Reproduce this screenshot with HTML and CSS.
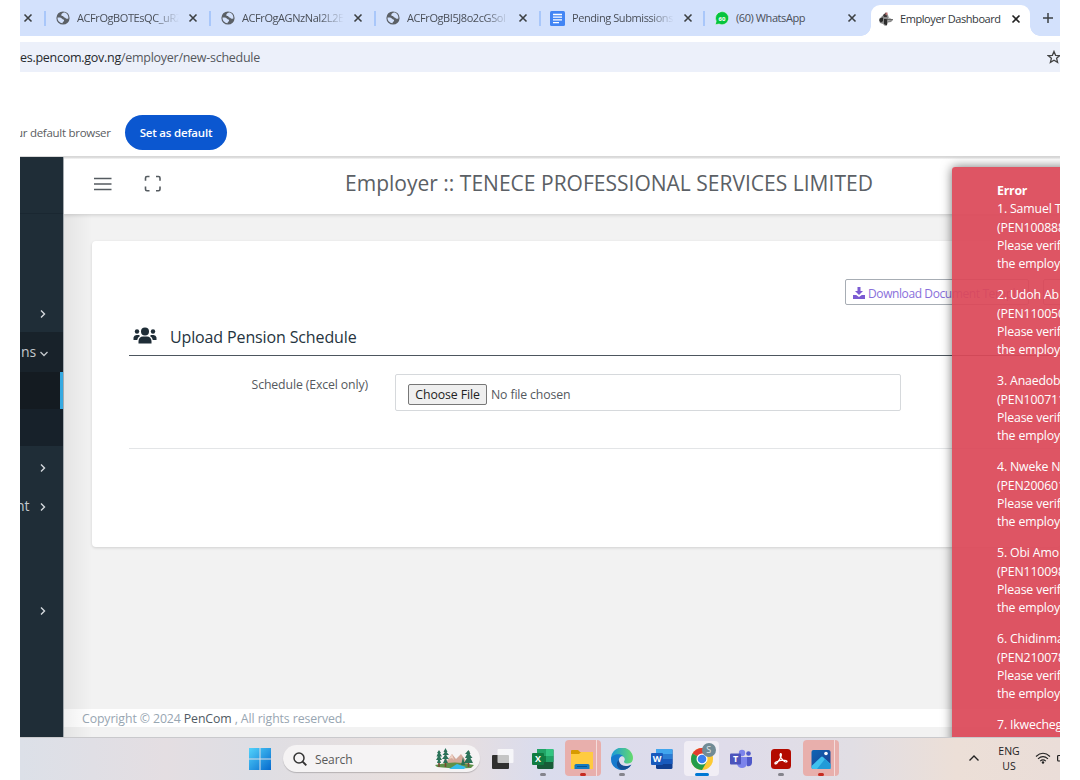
FILE: index.html
```html
<!DOCTYPE html>
<html lang="en">
<head>
<meta charset="utf-8">
<title>Employer Dashboard</title>
<link rel="stylesheet" href="styles.css">
</head>
<body>
<svg class="defs" width="0" height="0">
  <symbol id="globe" viewBox="0 0 14 14"><circle cx="7" cy="7" r="6.600" fill="#5b6066"/><path d="M8 1.500C6 2 5 3.200 5.400 4.400c.5 1 1.800.4 2.200 1.300.3.8 1.600.6 1.900 1.400.3.9 1.600.8 2.900.3C12.600 4 10.500 1.500 8 1.500ZM1.500 6.600c1.900-.3 3.700-.1 4.600 1.200.6.9 2.100.5 2 1.700-.1 1.100-1.500 1-1.600 2.800C3.700 12 1.400 9.800 1.500 6.600Z" fill="#d3e1fc"/></symbol>
  <symbol id="x" viewBox="0 0 10 10"><path d="M1.500 1.500 8.500 8.500M8.500 1.500 1.500 8.500" stroke="currentColor" stroke-width="1.600" fill="none"/></symbol>
  <symbol id="chev" viewBox="0 0 8 10"><path d="M2 1.500 5.500 5 2 8.500" stroke="#d5dade" stroke-width="1.400" fill="none"/></symbol>
</svg>
<div class="screen">
  <div class="tabs">
    <div class="tab tab-cut"><svg class="close"><use href="#x"/></svg></div>
    <div class="tab"><svg class="fav"><use href="#globe"/></svg><span class="tab-title fade">ACFrOgBOTEsQC_uRZ</span><svg class="close"><use href="#x"/></svg></div>
    <div class="tab"><svg class="fav"><use href="#globe"/></svg><span class="tab-title fade">ACFrOgAGNzNaI2L2E</span><svg class="close"><use href="#x"/></svg></div>
    <div class="tab"><svg class="fav"><use href="#globe"/></svg><span class="tab-title fade">ACFrOgBI5J8o2cGSoI</span><svg class="close"><use href="#x"/></svg></div>
    <div class="tab tab-doc"><svg class="fav doc" viewBox="0 0 15 15"><rect width="15" height="15" rx="1.500" fill="#4285f4"/><path d="M3 3.500h9M3 6.200h9M3 8.900h9M3 11.600h6" stroke="#fff" stroke-width="1.300"/></svg><span class="tab-title fade">Pending Submissions</span><svg class="close"><use href="#x"/></svg></div>
    <div class="tab tab-wa"><svg class="fav" viewBox="0 0 14 14"><path d="M.3 13.700 1.200 10.200A6.600 6.600 0 1 1 4 13Z" fill="#06c43c" stroke="#fff" stroke-width=".5"/><text x="7" y="9.500" class="badge">60</text></svg><span class="tab-title">(60) WhatsApp</span><svg class="close"><use href="#x"/></svg></div>
    <div class="tab-active"><svg class="fav" viewBox="0 0 14 14"><path d="M0 8 2 5 5 2.500 7 1l2 2 1 3 4 2-2 2-3 .5-1 2.500-2 1-2-2-3-1Z" fill="#8b8b8b"/><path d="M.5 6.500 4 5.500V9L2 10.500.5 9ZM5 7h3v6.500L5 12Z" fill="#2c2c2c"/><path d="M4 3 7 .5 8 5H5Z" fill="#3a3434"/><path d="m9 5 4.500 2.500L9 9Z" fill="#b5b5b5"/><path d="M7.500 7.500H14" stroke="#555" stroke-width=".8"/><path d="M6.500.5h2V3h-2Z" fill="#b57070"/></svg><span class="tab-title">Employer Dashboard</span><svg class="close"><use href="#x"/></svg></div>
    <div class="tab-new"><svg viewBox="0 0 10 10"><path d="M5 0v10M0 5h10" stroke="#3c4043" stroke-width="1.500"/></svg></div>
  </div>
  <div class="urlbar"><span class="url"><b>es.pencom.gov.ng</b>/employer/new-schedule</span>
    <svg class="star" viewBox="0 0 14 14"><path d="m7 1.400 1.600 3.900 4.200.3-3.200 2.700 1 4.100L7 10.200l-3.600 2.200 1-4.100L1.200 5.600l4.200-.3Z" fill="none" stroke="#444" stroke-width="1.300"/></svg>
  </div>
  <div class="infobar"><span class="info-text">ur default browser</span><span class="set-default">Set as default</span></div>

  <div class="app">
    <nav class="side">
      <div class="nav-item i1"><svg class="chev"><use href="#chev"/></svg></div>
      <div class="nav-item open"><span class="nav-text ons">ns</span><svg class="chev-down" viewBox="0 0 10 8"><path d="M1.500 2 5 5.500 8.500 2" stroke="#c3c8cc" stroke-width="1.300" fill="none"/></svg></div>
      <div class="sub current"></div>
      <div class="sub"></div>
      <div class="nav-item i2"><svg class="chev"><use href="#chev"/></svg></div>
      <div class="nav-item i3"><span class="nav-text ment">nt</span><svg class="chev"><use href="#chev"/></svg></div>
      <div class="nav-item i4"><svg class="chev"><use href="#chev"/></svg></div>
    </nav>
    <main class="main">
      <header class="header">
        <svg class="burger" viewBox="0 0 18 14"><path d="M0 1.500h17.500M0 7h17.500M0 12.500h17.500" stroke="#555b60" stroke-width="1.600"/></svg>
        <svg class="full" viewBox="0 0 18 18"><path d="M1.500 5.800V3q0-1.500 1.500-1.500H5.500M12 1.500h2.500Q16 1.500 16 3v2.800M16 11.500V14.300q0 1.500-1.500 1.500H12M5.500 15.800H3q-1.500 0-1.500-1.500V11.500" fill="none" stroke="#555b60" stroke-width="1.600"/></svg>
        <h1 class="title">Employer :: TENECE PROFESSIONAL SERVICES LIMITED</h1>
      </header>
      <section class="card">
        <div class="actions"><span class="btn"><svg class="dl" viewBox="0 0 12 12"><path d="M4.500 0h3v4H10L6 8 2 4h2.500ZM0 8h3.200L6 10l2.800-2H12v4H0Z" fill="#7b5bd2"/></svg><span class="btn-text">Download Document Template</span></span><span class="btn"></span></div>
        <div class="heading">
          <svg class="people" viewBox="0 0 24 17"><g fill="#1f2d37"><circle cx="12" cy="4.500" r="4"/><circle cx="4" cy="4.500" r="2.200"/><circle cx="20" cy="4.500" r="2.200"/><path d="M5.500 16.500V14Q6 9.500 10 9.500h4q4 0 4.500 4.500v2.500ZM.5 13v-2.500Q1 8 3.500 8H6l1 1Q4.500 10.500 4.200 13ZM23.500 13v-2.500Q23 8 20.500 8H18l-1 1q2.500 1.500 2.800 4Z"/></g></svg>
          <h2 class="sub-title">Upload Pension Schedule</h2>
        </div>
        <div class="field">
          <label class="label">Schedule (Excel only)</label>
          <div class="file"><span class="choose">Choose File</span><span class="nofile">No file chosen</span></div>
        </div>
        <div class="rule"></div>
      </section>
      <footer class="footer"><span class="copy">Copyright © 2024 <b>PenCom</b> , All rights reserved.</span></footer>
    </main>
    <aside class="toast">
      <strong class="err">Error</strong>
      <p>1. Samuel T<br>(PEN100888<br>Please verify<br>the employe</p>
      <p>2. Udoh Ab<br>(PEN110050<br>Please verify<br>the employe</p>
      <p>3. Anaedob<br>(PEN100711<br>Please verify<br>the employe</p>
      <p>4. Nweke N<br>(PEN200601<br>Please verify<br>the employe</p>
      <p>5. Obi Amo<br>(PEN110098<br>Please verify<br>the employe</p>
      <p>6. Chidinma<br>(PEN210078<br>Please verify<br>the employe</p>
      <p>7. Ikwecheg</p>
    </aside>
  </div>

  <div class="taskbar">
    <svg class="win" viewBox="0 0 22 22"><defs><linearGradient id="w" gradientUnits="userSpaceOnUse" x1="0" y1="0" x2="22" y2="22"><stop stop-color="#52d3fb"/><stop offset="1" stop-color="#0669cd"/></linearGradient></defs><path d="M0 0h10.500v10.500H0ZM11.500 0H22v10.500H11.500ZM0 11.500h10.500V22H0ZM11.500 11.500H22V22H11.500Z" fill="url(#w)"/></svg>
    <div class="search">
      <svg class="mag" viewBox="0 0 14 14"><circle cx="6" cy="6" r="5" fill="none" stroke="#333" stroke-width="1.500"/><path d="m9.600 9.600 3.700 3.700" stroke="#333" stroke-width="1.900"/></svg>
      <span class="search-text">Search</span>
      <svg class="scene" viewBox="0 0 40 21"><path d="M9 17 17 6l4 5 5-5 8 11Z" fill="#d4a99b"/><path d="m17 6-3 5 3-1 2 2Z" fill="#efd3c6"/><path d="M0 17q20-5 39 0l-3 3q-17 1-34-1Z" fill="#5e9149"/><path d="m14 21 8-5 9 3-2 2Z" fill="#35bceb"/><path d="M10.500 2v17M4 4v15M33.500 3v16" stroke="#774a32" stroke-width="1.600"/><path d="m10.500 0 2 4h-1l2.500 3h-3l3 4h-3l2 4h-5l2-4H7l3-4H7.500L10 4H8.500ZM4 2l2 3H5l2 3.500H5L7 12H5l1 3H2l1-3H1l2-3.500H1.500L3 5H2ZM33.500 2l2 4h-1l3 4h-2l2.500 5h-9l3-5h-2l2-4h-2ZM28 9l2 8h-4Z" fill="#2a7258"/></svg>
    </div>
    <div class="apps">
      <div class="cell"><svg viewBox="0 0 22 22"><rect y="7" width="17" height="14" rx="1" fill="#30302f"/><rect x="5.500" y="1" width="16" height="14" rx="1" fill="#fff" fill-opacity=".72"/></svg></div>
      <div class="cell"><svg viewBox="0 0 22 22"><rect x="5" y="1" width="16.500" height="20" rx="1.500" fill="#185c37"/><path d="M5 1h9v7H5Z" fill="#21a366"/><path d="M14 1h7.500v7H14Z" fill="#33c481"/><path d="M5 8h9v6H5Z" fill="#107c41"/><path d="M14 8h7.500v6H14Z" fill="#21a366"/><rect y="5" width="12" height="12" rx="1" fill="#107c41"/><text x="6" y="14" class="letter">X</text></svg><i class="dot"></i></div>
      <div class="cell hot"><svg viewBox="0 0 22 22"><path d="M0 3q0-1 1-1h6l2 2h12v7H0Z" fill="#d79b00"/><path d="M0 6h8l2-2h12v17H0Z" fill="#ffcb3f"/><path d="M3.500 21v-3.500q0-1.500 1.500-1.500h12q1.500 0 1.500 1.500V21Z" fill="#1579bf"/><path d="M6 18.500h10" stroke="#09568f"/></svg><i class="dot red"></i></div>
      <div class="cell"><svg viewBox="0 0 22 22"><defs><linearGradient id="e" x2="1"><stop stop-color="#1999dc"/><stop offset="1" stop-color="#65db6b"/></linearGradient></defs><path d="M0 11a11 11 0 0 1 22-1q0 5-5 5.500-4 0-4-2 2-3-1-5Q8 6 0 11Z" fill="url(#e)"/><path d="M0 11c1-5 9-6 12-3-3 0-5 3-4 6 1 4 6 6 12 3-3 5-9 6-13 4.300Q0 18.500 0 11Z" fill="#1679cd"/><path d="M8 12c0 5 6 8 12.500 4.500C17 22 12 22.800 9 21c-4-2.500-4-7-1-9Z" fill="#144f95"/></svg><i class="dot"></i></div>
      <div class="cell"><svg viewBox="0 0 22 22"><rect x="5" y="1" width="16.500" height="20" rx="1.500" fill="#103f91"/><path d="M5 1h16.500v5H5Z" fill="#41a5ee"/><path d="M5 6h16.500v5H5Z" fill="#2b7cd3"/><path d="M5 11h16.500v5H5Z" fill="#185abd"/><rect y="5" width="12" height="12" rx="1" fill="#185abd"/><text x="6" y="14" class="letter">W</text></svg></div>
      <div class="cell lit"><svg viewBox="0 0 22 22"><circle cx="11" cy="11" r="11" fill="#fcc934"/><path d="M11 11 1.500 5.500A11 11 0 0 1 20.500 5.500Z" fill="#e33b2e"/><path d="M11 11 1.500 5.500A11 11 0 0 0 11 22l4.800-8.300Z" fill="#249c4a"/><path d="M11 5.500h9.500L22 11l-6 2Z" fill="#fcc934"/><circle cx="11" cy="11" r="5.500" fill="#fff"/><circle cx="11" cy="11" r="4.300" fill="#397ff0"/></svg><span class="avatar">S</span><i class="dot wide"></i></div>
      <div class="cell"><svg viewBox="0 0 22 22"><circle cx="12" cy="5" r="3.200" fill="#7b83eb"/><circle cx="18.500" cy="5.500" r="2.300" fill="#5059c9"/><path d="M15 9h7v6q-1 4-5 3Z" fill="#5059c9"/><path d="M7 9h10v7q-1 4-5 4t-5-4Z" fill="#7b83eb"/><rect y="5.500" width="11" height="11" rx="1" fill="#4b53bc"/><text x="5.500" y="14" class="letter">T</text></svg></div>
      <div class="cell"><svg viewBox="0 0 22 22"><rect x="1" y="1" width="20" height="20" rx="3.500" fill="#b30b00"/><path d="M10.500 5.500c2 0 .5 5-3.500 9.500-2 2-3 0-1-1 3-1.500 7-2.500 10-1.500 2 .8.500 2-1 1.200C12 12 9 8 10.500 5.500Z" fill="none" stroke="#fff" stroke-width="1.200"/></svg><i class="dot"></i></div>
      <div class="cell hot"><svg viewBox="0 0 22 22"><defs><linearGradient id="p" x2="1" y2="1"><stop stop-color="#0f65b5"/><stop offset="1" stop-color="#1d3f91"/></linearGradient></defs><rect x="1.500" y="2" width="19" height="19" rx="2" fill="url(#p)"/><path d="m1.500 18 9.500-9q1-.8 2 0l7.500 7V20q0 1-1 1H3q-1.500 0-1.500-1Z" fill="#3fc1ef"/><path d="m7 21 8-10 5.500 5V21Z" fill="#219bd8"/><circle cx="16" cy="5.500" r="1.800" fill="#fff"/></svg><i class="dot red"></i></div>
    </div>
    <div class="tray">
      <svg class="up" viewBox="0 0 12 8"><path d="m1.500 6.500 4.500-4.500 4.500 4.500" fill="none" stroke="#222" stroke-width="1.400"/></svg>
      <span class="lang">ENG<br>US</span>
      <svg class="wifi" viewBox="0 0 16 12"><path d="M1 4.500q7-6.500 14 0M3 6.900q5-4.600 10 0M5.200 9.200q2.800-2.600 5.600 0" fill="none" stroke="#222" stroke-width="1.100"/><circle cx="8" cy="10.500" r="1.200" fill="#222"/></svg>
      <svg class="batt" viewBox="0 0 14 8"><rect x=".6" y="1.500" width="12" height="5.500" rx="1" fill="none" stroke="#222" stroke-width="1.200"/></svg>
    </div>
  </div>
</div>
</body>
</html>
```
FILE: styles.css
```css
* { box-sizing: border-box; }
body { margin: 0; background: #fff; font-family: "Open Sans", "Noto Sans", sans-serif; color: #55595e; }
svg { display: block; flex: none; }
h1, h2, p { margin: 0; font-weight: 400; }
b { font-weight: 400; }
.defs { position: absolute; }
.screen { width: 1040px; height: 780px; margin-left: 20px; overflow: hidden; display: flex; flex-direction: column; }

.tabs { height: 36px; background: #d3e1fc; display: flex; flex: none; }
.tab { width: 165px; flex: none; display: flex; align-items: center; padding-left: 11px; position: relative; }
.tab::before { content: ""; position: absolute; left: -1px; top: 11px; width: 2px; height: 15px; background: #a9c7fa; }
.tab-cut { width: 25px; padding-left: 3px; }
.tab-cut::before { display: none; }
.tab-doc { width: 164px; }
.tab-wa { width: 167px; }
.fav { width: 14px; height: 14px; margin-right: 7px; }
.doc { width: 15px; height: 15px; margin-left: -1px; }
.close { width: 10px; height: 10px; color: #3c4043; }
.tab-title { font-size: 11px; line-height: 18px; white-space: nowrap; overflow: hidden; width: 102px; margin-right: 9px; color: #4a4f58; letter-spacing: -.42px; }
.fade { -webkit-mask-image: linear-gradient(to right, #000 76%, transparent 100%); mask-image: linear-gradient(to right, #000 76%, transparent 100%); }
.badge { font-size: 6px; font-weight: 700; fill: #fff; text-anchor: middle; }
.tab-active { width: 159px; height: 31px; margin-top: 5px; background: #fff; border-radius: 9px 9px 0 0; display: flex; align-items: center; padding: 0 0 4px 8px; position: relative; }
.tab-active::before, .tab-active::after { content: ""; position: absolute; bottom: 0; width: 10px; height: 10px; }
.tab-active::before { left: -10px; background: radial-gradient(circle at 0 0, transparent 9.500px, #fff 10px); }
.tab-active::after { right: -10px; background: radial-gradient(circle at 100% 0, transparent 9.500px, #fff 10px); }
.tab-active .close { color: #222; }
.tab-active .tab-title { color: #33373b; width: 104px; margin-right: 7px; }
.tab-new { flex: 1; display: flex; align-items: center; padding-left: 13px; }
.tab-new svg { width: 10px; height: 10px; }

.urlbar { height: 30px; margin-top: 6px; flex: none; background: #ecf0fa; display: flex; align-items: center; justify-content: space-between; overflow: hidden; }
.url { font-size: 12.500px; color: #55585d; white-space: nowrap; letter-spacing: -.27px; }
.url b { color: #26292d; }
.star { width: 14px; height: 14px; margin-right: -1px; }
.infobar { height: 84px; flex: none; display: flex; align-items: flex-start; padding-top: 43px; }
.info-text { width: 105px; font-size: 11.500px; line-height: 36px; white-space: nowrap; text-indent: -4px; color: #5a5d61; letter-spacing: -.28px; }
.set-default { width: 102px; height: 35px; border-radius: 18px; background: #0b57d0; color: #fff; font-size: 11.500px; font-weight: 600; line-height: 36px; text-align: center; white-space: nowrap; letter-spacing: -.2px; }

.app { height: 581px; flex: none; display: flex; position: relative; overflow: hidden; }
.app::before { content: ""; position: absolute; z-index: 3; left: 0; right: 0; top: 0; height: 3px; background: linear-gradient(#d8d8d8 40%, rgba(216,216,216,.2)); }
.side { width: 43px; background: #1f2d37; position: relative; z-index: 4; margin-top: 1px; box-shadow: 1px 0 0 #a5abb0; flex: none; }
.side::before { content: ""; position: absolute; left: 0; top: 56px; width: 43px; height: 1px; background: #1a2731; }
.side::after { content: ""; position: absolute; left: 44px; top: 57px; bottom: 0; width: 28px; background: linear-gradient(90deg, rgba(0,0,0,.06), transparent); }
.nav-item { display: flex; align-items: center; height: 38px; }
.i1 { margin-top: 138px; padding-left: 19px; }
.chev { width: 8px; height: 10px; }
.open { height: 40px; background: #18222a; margin-top: -1px; }
.nav-text { font-size: 14px; width: 19px; color: #c3c8cc; line-height: 20px; overflow: hidden; }
.ons { text-indent: 1px; }
.ment { text-indent: -4px; }
.chev-down { width: 10px; height: 8px; margin-top: 3px; }
.sub { height: 37px; background: #17212a; }
.current { background: #141b21; border-right: 3px solid #35a9e1; }
.i2 { padding-left: 19px; height: 43px; }
.i3 { height: 34px; }
.i3 .chev { margin-top: 2px; }
.i4 { margin-top: 69px; padding-left: 19px; }
.main { flex: 1; min-width: 0; background: #f2f2f2; display: flex; flex-direction: column; }
.header { height: 58px; flex: none; background: #fff; box-shadow: 0 1px 4px rgba(0,0,0,.16); display: flex; align-items: center; padding-bottom: 2px; }
.burger { width: 18px; height: 14px; margin-left: 31px; }
.full { width: 18px; height: 18px; margin-left: 32px; }
.title { font-size: 21px; line-height: 30px; margin: -3px 0 0 183px; white-space: nowrap; color: #5b6065; letter-spacing: .01px; }
.card { height: 306px; margin: 27px 0 0 29px; background: #fff; border-radius: 4px; box-shadow: 0 1px 3px rgba(0,0,0,.14); padding: 38px 0 0 37px; flex: none; }
.actions { display: flex; gap: 14px; margin-left: 716px; height: 26px; }
.btn { width: 184px; flex: none; border: 1px solid #a7adb4; border-radius: 2px; display: flex; align-items: center; padding: 2px 0 0 7px; color: #8a6fdb; }
.dl { width: 12px; height: 12px; margin-right: 3px; }
.btn-text { font-size: 12px; white-space: nowrap; letter-spacing: -.4px; }
.heading { height: 51px; border-bottom: 1px solid #4d565e; display: flex; align-items: center; padding: 13px 0 0 4px; }
.people { width: 24px; height: 17px; margin: -2px 13px 0 0; }
.sub-title { font-size: 16px; line-height: 22px; color: #263440; white-space: nowrap; letter-spacing: -.13px; }
.field { display: flex; margin-top: 18px; }
.label { width: 239px; text-align: right; font-size: 12.300px; line-height: 21px; white-space: nowrap; letter-spacing: -.13px; }
.file { margin-left: 27px; width: 506px; height: 37px; border: 1px solid #d6d9dc; border-radius: 2px; display: flex; align-items: center; padding: 3px 0 0 12px; }
.choose { width: 79px; height: 21px; border: 1px solid #777; border-radius: 2px; background: #efefef; color: #222; font-size: 12.300px; line-height: 20px; text-align: center; white-space: nowrap; letter-spacing: -.1px; }
.nofile { font-size: 12.300px; margin-left: 4px; white-space: nowrap; letter-spacing: -.15px; }
.rule { height: 1px; background: #e3e5e7; margin-top: 37px; }
.footer { height: 18px; margin-top: 162px; background: #fff; flex: none; display: flex; align-items: center; padding-left: 19px; }
.copy { font-size: 12.300px; color: #98a6b2; white-space: nowrap; letter-spacing: -.1px; }
.copy b { color: #505a63; }
.toast { position: absolute; z-index: 5; left: 931.500px; top: 11px; width: 150px; height: 590px; background: rgba(220,72,88,.93); border-radius: 3px 0 0 0; box-shadow: 0 0 11px rgba(0,0,0,.55); padding: 15px 0 0 45.500px; color: #fff; font-size: 12.300px; line-height: 18.300px; white-space: nowrap; letter-spacing: -.15px; }
.err { display: block; letter-spacing: -.2px; }
.toast p { margin-bottom: 12.800px; }

.taskbar { height: 43px; flex: none; border-top: 1px solid #c9c9cc; background: linear-gradient(90deg, #dce0e8, #e4dee2 14%, #dedee4 22%, #eadfdc 40%, #dadced 50%, #dfdcea 68%, #e1dee4 80%, #ecdfd7 90%, #eaddd8); display: flex; align-items: flex-start; }
.win { width: 22px; height: 22px; margin: 10px 0 0 229px; }
.search { width: 197px; height: 27px; margin: 7px 0 0 12px; border-radius: 14px; background: #f5f3f4; box-shadow: 0 1px 1px rgba(0,0,0,.2); display: flex; align-items: center; padding-left: 10px; }
.mag { width: 14px; height: 14px; }
.search-text { width: 110px; margin: 1px 0 0 8px; font-size: 12px; color: #595959; letter-spacing: -.1px; }
.scene { width: 40px; height: 21px; margin-left: 10px; }
.apps { display: flex; margin-left: 3px; }
.cell { width: 39.750px; height: 42px; display: flex; justify-content: center; align-items: flex-start; padding-top: 10px; position: relative; }
.cell svg { width: 22px; height: 22px; position: relative; }
.letter { font-size: 9px; font-weight: 700; fill: #fff; text-anchor: middle; }
.dot { position: absolute; left: 17px; bottom: 4px; width: 6px; height: 3px; border-radius: 2px; background: #84848c; }
.red { background: #c62b21; }
.wide { left: 13px; width: 14px; background: #0078d4; }
.hot::before { content: ""; position: absolute; left: 2px; top: 2px; width: 36px; height: 36px; border-radius: 4px; background: linear-gradient(90deg, #e8afac 31px, #f4dcdb 31px, #f4dcdb 32px, #e8afac 32px); }
.lit::before { content: ""; position: absolute; left: 2px; top: 3px; width: 35px; height: 35px; border-radius: 4px; background: #f1eef5; }
.avatar { position: absolute; left: 20px; top: 5px; width: 14px; height: 14px; border-radius: 50%; background: #718b95; color: #dfe6e9; font-size: 9px; line-height: 14px; text-align: center; }
.tray { display: flex; align-items: flex-start; margin-left: auto; }
.up { width: 12px; height: 8px; margin-top: 16px; }
.lang { width: 36px; margin: 6px 0 0 11px; font-size: 10.500px; line-height: 14.500px; text-align: center; color: #222; }
.wifi { width: 16px; height: 12px; margin: 14px 0 0 8px; }
.batt { width: 14px; height: 8px; margin: 16px -11px 0 6px; }
```
